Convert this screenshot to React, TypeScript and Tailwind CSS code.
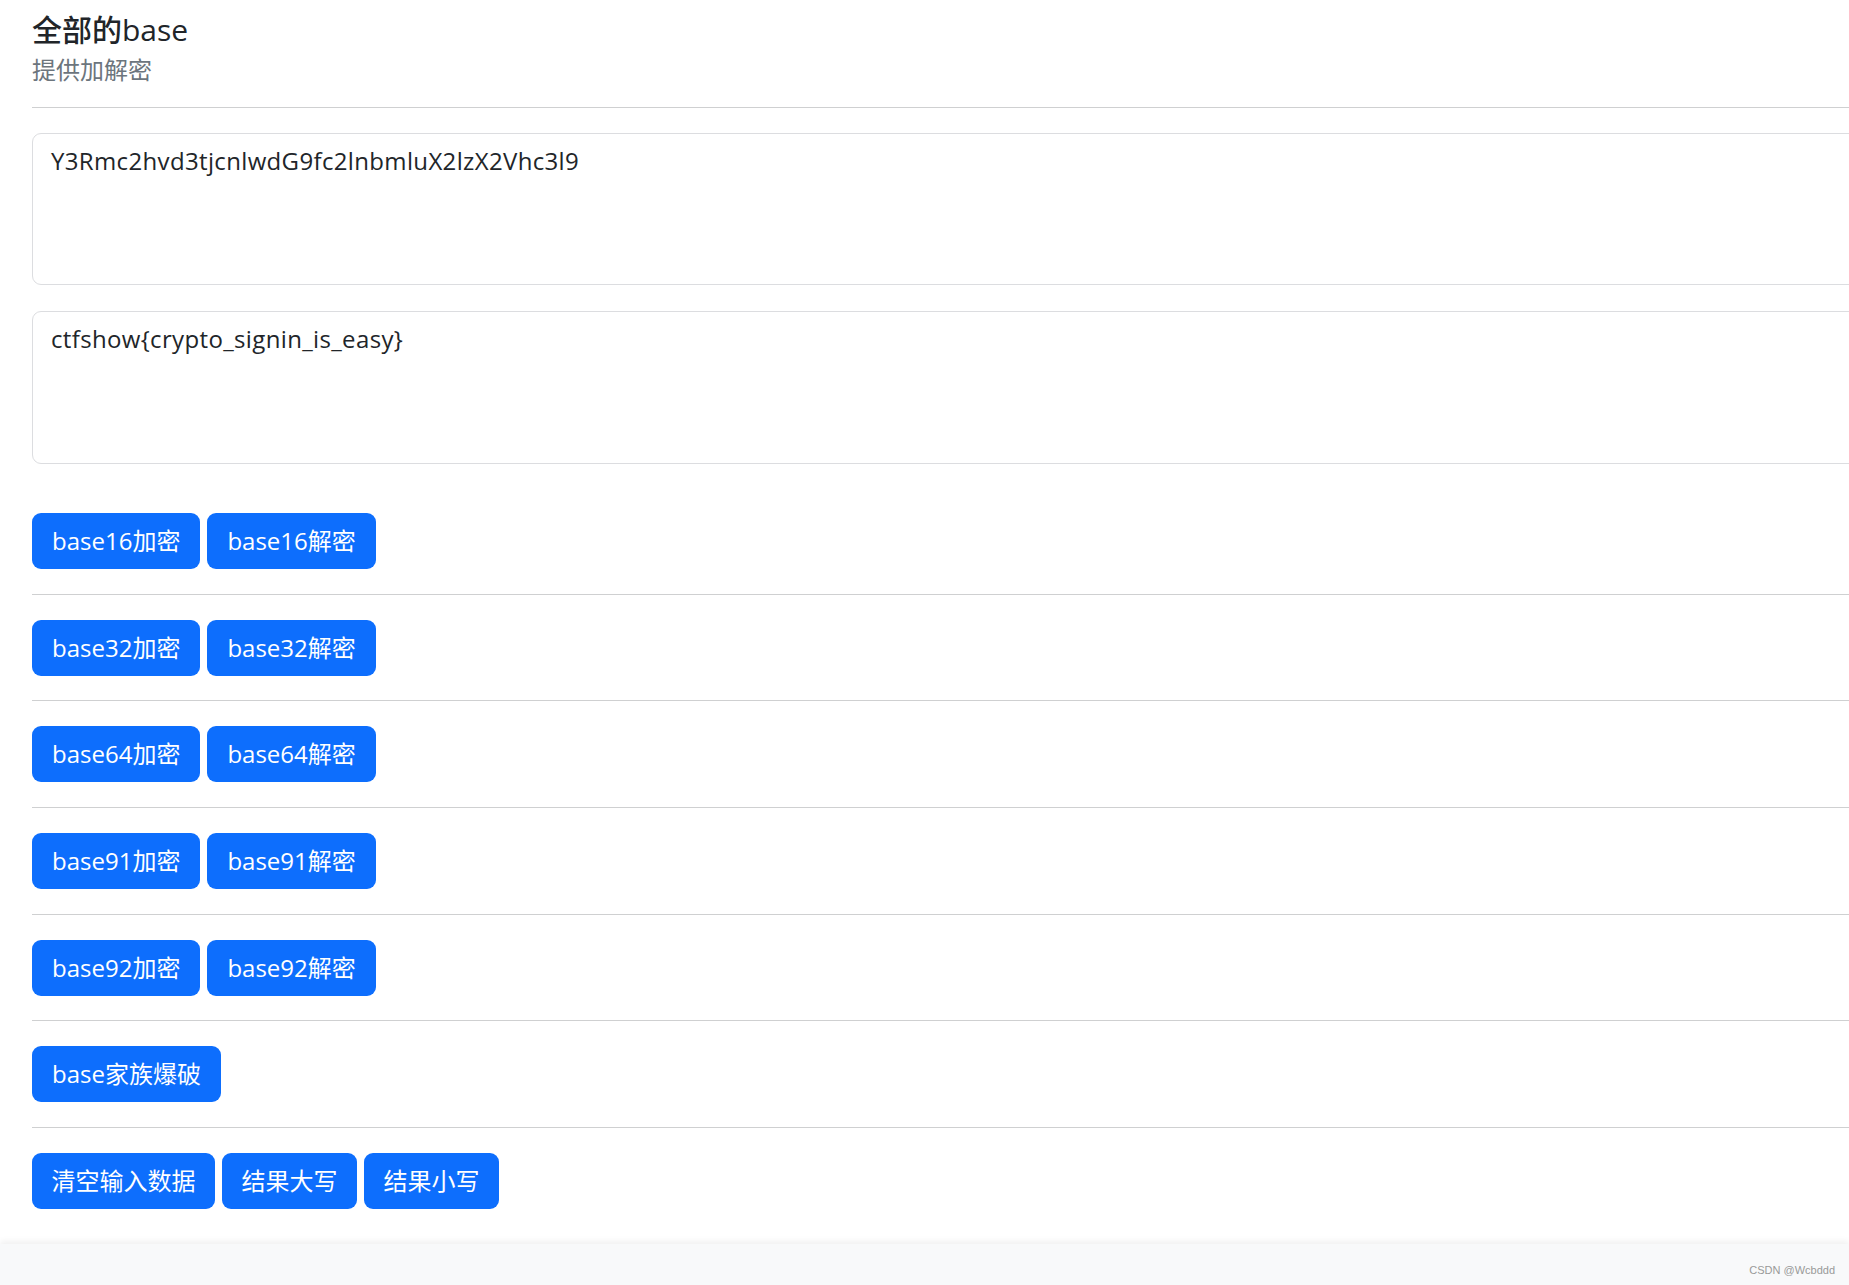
const font = "font-['Open_Sans','Noto_Sans_CJK_SC',sans-serif]";

const rows: string[][] = [
  ['base16加密', 'base16解密'],
  ['base32加密', 'base32解密'],
  ['base64加密', 'base64解密'],
  ['base91加密', 'base91解密'],
  ['base92加密', 'base92解密'],
  ['base家族爆破'],
  ['清空输入数据', '结果大写', '结果小写'],
];

const Btn = ({ label, compact }: { label: string; compact?: boolean }) => (
  <button
    type="button"
    className={`h-[56px] ${compact ? 'px-[19.5px]' : 'px-[20px]'} rounded-[9px] bg-[#0d6efd] text-white text-[24px] leading-[36px] whitespace-nowrap`}
  >
    {label}
  </button>
);

export default function App() {
  return (
    <div className={`min-h-screen flex flex-col bg-white text-[#212529] ${font}`}>
      <main className="flex-1 w-full overflow-hidden">
        <div className="w-[calc(100%+16px)] pl-8 pt-[12px]">
          {/* Header */}
          <h5 className="text-[30px] leading-[36px] font-medium mb-[4px]">全部的base</h5>
          <p className="text-[24px] leading-[36px] text-[#6c757d]">提供加解密</p>
          <hr className="mt-[19px] border-0 border-t border-[#cfd0d1]" />

          {/* Input / output */}
          <textarea
            className={`block mt-[25px] w-full h-[152px] px-[18px] py-[9px] border border-[#dcdde0] rounded-[9px] text-[24px] leading-[36px] tracking-[0.35px] resize-none outline-none ${font}`}
            defaultValue="Y3Rmc2hvd3tjcnlwdG9fc2lnbmluX2lzX2Vhc3l9"
          />
          <textarea
            className={`block mt-[26px] w-full h-[153px] px-[18px] py-[9px] border border-[#dcdde0] rounded-[9px] text-[24px] leading-[36px] tracking-[0.35px] resize-none outline-none ${font}`}
            defaultValue="ctfshow{crypto_signin_is_easy}"
          />

          {/* Actions */}
          <div className="mt-[49px]">
            {rows.map((row, i) => {
              const last = i === rows.length - 1;
              return (
                <div key={i}>
                  {i > 0 && <hr className="my-[24.83px] border-0 border-t border-[#cfd0d1]" />}
                  <div className="flex gap-[7px]">
                    {row.map((label) => (
                      <Btn key={label} label={label} compact={last} />
                    ))}
                  </div>
                </div>
              );
            })}
          </div>
        </div>
      </main>

      <footer className="h-[41px] bg-[#f8f9fa] shadow-[0_-3px_6px_rgba(0,0,0,0.06)] flex items-end justify-end pr-[14px] pb-[7px]">
        <span className="text-[11px] text-[#999] font-['Liberation_Sans',sans-serif]">CSDN @Wcbddd</span>
      </footer>
    </div>
  );
}
